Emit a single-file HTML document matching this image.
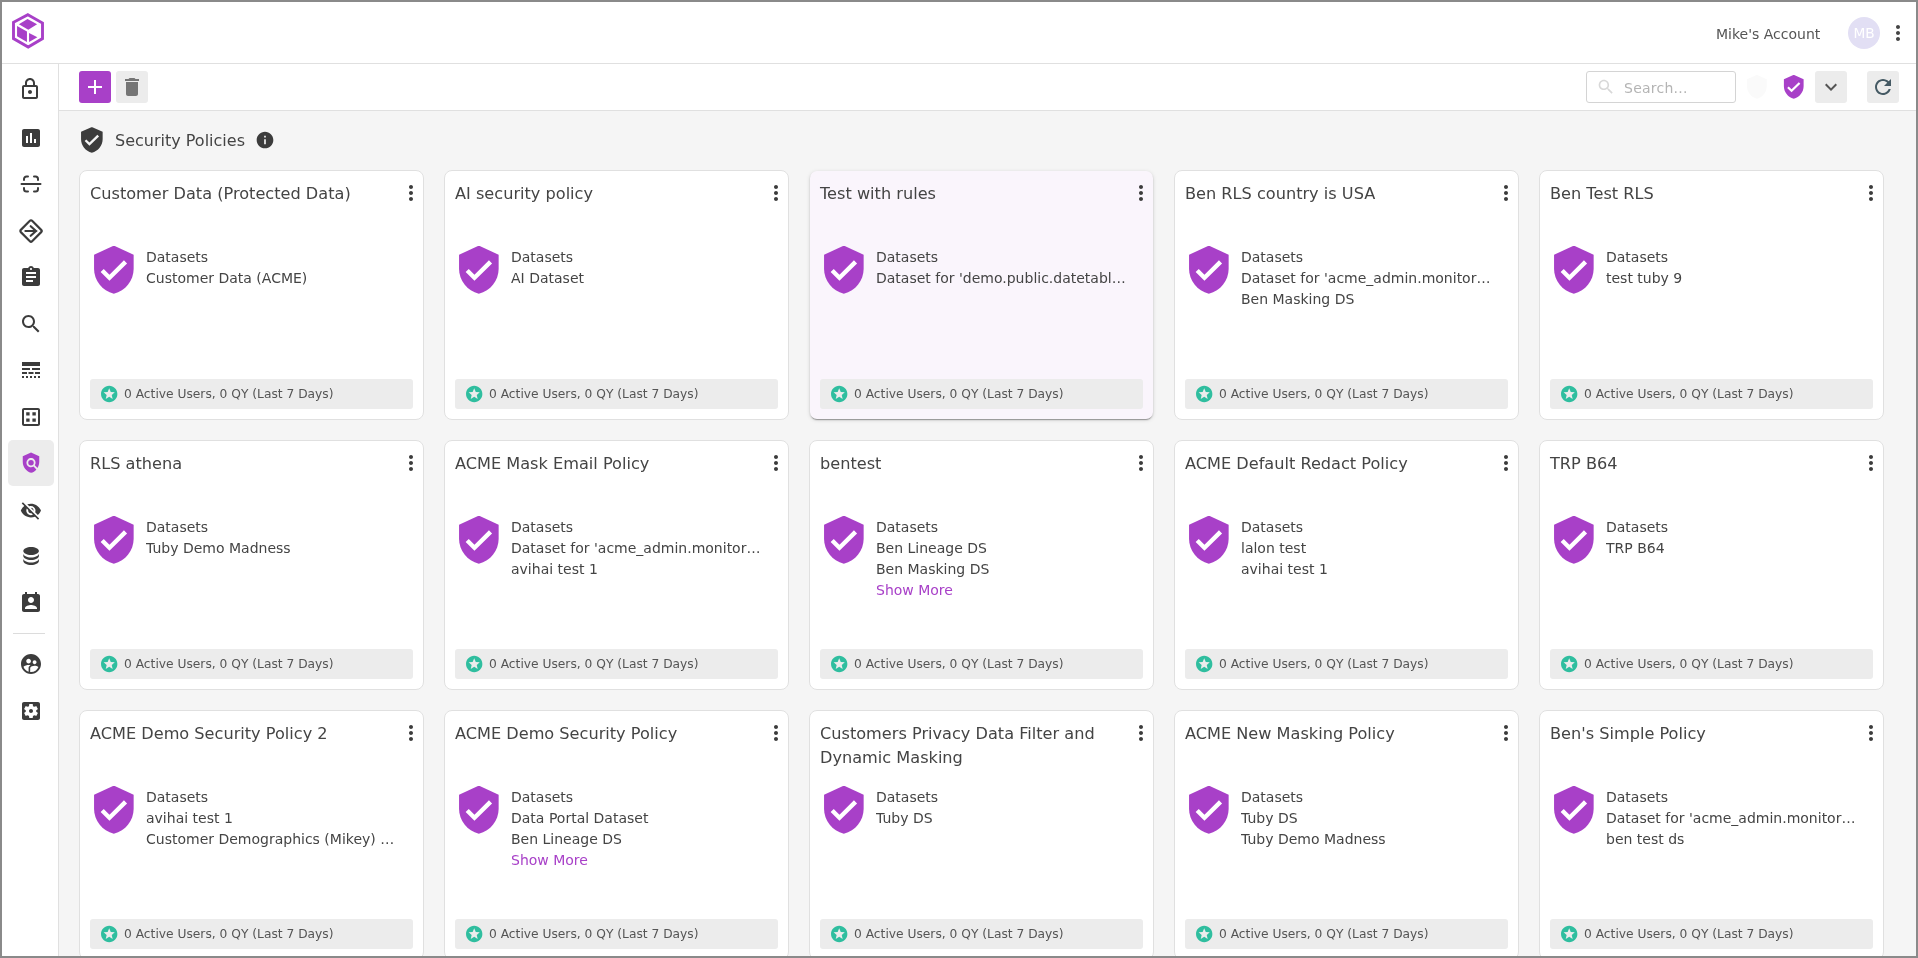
<!DOCTYPE html>
<html><head><meta charset="utf-8"><title>Security Policies</title>
<style>
*{box-sizing:border-box;margin:0;padding:0}
html,body{width:1918px;height:958px;overflow:hidden;background:#fff}
body{font-family:"DejaVu Sans","Liberation Sans",sans-serif;color:#444;position:relative}
#frame{position:absolute;left:0;top:0;width:1918px;height:958px;border:2px solid #8a8a8a;overflow:hidden;background:#f5f5f5}
#inner{position:absolute;left:-2px;top:-2px;width:1918px;height:958px;will-change:transform}
#header{position:absolute;left:0;top:0;width:1918px;height:64px;background:#fff;border-bottom:1px solid #e0e0e0}
#side{position:absolute;left:0;top:64px;width:59px;height:900px;background:#fff;border-right:1px solid #e0e0e0}
#toolbar{position:absolute;left:59px;top:64px;width:1860px;height:47px;background:#fff;border-bottom:1px solid #e0e0e0}
.abs{position:absolute}
.sicon{position:absolute;left:19px}
.btn{position:absolute;width:32px;height:32px;border-radius:3px;background:#ececec}
.btn svg{position:absolute;left:4px;top:4px}
.card{position:absolute;width:345px;height:250px;background:#fff;border:1px solid #e0e0e0;border-radius:8px}
.card.sel{background:#faf5fc;border:none;width:343px;height:248px;margin:1px 0 0 1px;border-radius:7px;box-shadow:0 2px 1px -1px rgba(0,0,0,.25),0 1px 2px 0 rgba(0,0,0,.16),0 1px 4px 0 rgba(0,0,0,.13)}
.ctitle{position:absolute;left:10px;top:11px;width:300px;font-size:16.15px;line-height:24px;color:#444}
.cmore{position:absolute;left:319px;top:10px}
.cshield{position:absolute;left:6px;top:70px}
.clines{position:absolute;left:66px;top:76.300px;width:250px;font-size:14px;line-height:21px;color:#444}
.clines div{white-space:nowrap;overflow:hidden;text-overflow:ellipsis}
.clines .more{color:#a840c8}
.cfoot{position:absolute;left:10px;top:208px;width:323px;height:30px;background:#ececec;border-radius:3px;font-size:12.25px;line-height:30px;color:#555;padding-left:34px;white-space:nowrap}

</style></head><body><div id="frame"><div id="inner">

<div id="header">
<svg class="abs" style="left:12px;top:13px" width="34" height="38" viewBox="0 0 34 38"><polygon points="15.900,1.700 30.500,10 30.500,25.600 16.200,34.100 1.500,25.600 1.500,9.300" fill="none" stroke="#a840c8" stroke-width="2.900" stroke-linejoin="miter"/><polygon points="15.500,6.050 25.100,11.300 16.300,16.750 6.900,11.300" fill="#a840c8"/><polygon points="5.050,13.100 14.960,18.600 14.960,29 5.050,23.300" fill="#a840c8"/><polygon points="17.050,19.900 25.400,24.300 17.050,29" fill="#a840c8"/></svg>
<div class="abs" style="left:1716px;top:25px;font-size:14px;line-height:18px;color:#555;white-space:nowrap">Mike's Account</div>
<div class="abs" style="left:1848px;top:17px;width:32px;height:32px;border-radius:16px;background:#e2dff4;color:#fff;font-size:13.7px;line-height:32px;text-align:center">MB</div>
<svg style="position:absolute;left:1886px;top:21px;overflow:visible" width="25" height="25" viewBox="0 0 25 25" ><g transform="translate(0.000 0.000) scale(1.000 1.000)"><path fill="#444" d="M12 8c1.1 0 2-.9 2-2s-.9-2-2-2-2 .9-2 2 .9 2 2 2zm0 2c-1.1 0-2 .9-2 2s.9 2 2 2 2-.9 2-2-.9-2-2-2zm0 6c-1.1 0-2 .9-2 2s.9 2 2 2 2-.9 2-2-.9-2-2-2z"/></g></svg>
</div>
<div id="side">
<div class="abs" style="left:8px;top:376px;width:46px;height:46px;border-radius:5px;background:#ececec"></div>
<svg style="position:absolute;left:18px;top:13px;overflow:visible" width="25" height="25" viewBox="0 0 25 25" ><g transform="translate(0.000 0.000) scale(1.000 1.000)"><path fill="#3c3c3c" d="M18 8h-1V6c0-2.76-2.24-5-5-5S7 3.24 7 6v2H6c-1.1 0-2 .9-2 2v10c0 1.1.9 2 2 2h12c1.1 0 2-.9 2-2V10c0-1.1-.9-2-2-2zM9 6c0-1.66 1.34-3 3-3s3 1.34 3 3v2H9V6zm9 14H6V10h12v10zm-6-3c1.1 0 2-.9 2-2s-.9-2-2-2-2 .9-2 2 .9 2 2 2z"/></g></svg>
<svg style="position:absolute;left:19px;top:62px;overflow:visible" width="25" height="25" viewBox="0 0 25 25" ><g transform="translate(0.000 0.000) scale(1.000 1.000)"><path fill="#3c3c3c" d="M19 3H5c-1.1 0-2 .9-2 2v14c0 1.1.9 2 2 2h14c1.1 0 2-.9 2-2V5c0-1.1-.9-2-2-2zM9 17H7v-7h2v7zm4 0h-2V7h2v10zm4 0h-2v-4h2v4z"/></g></svg>
<svg style="position:absolute;left:19px;top:108px" width="24" height="24" viewBox="0 0 24 24" fill="none" stroke="#3c3c3c" stroke-width="2" stroke-linecap="round"><path d="M2.500 12h19M5 8v-1a2.500 2.500 0 0 1 2.500-2.500h1.500M15 4.500h1.500a2.500 2.500 0 0 1 2.500 2.500v1M5 16v1a2.500 2.500 0 0 0 2.500 2.500h1.500M15 19.500h1.500a2.500 2.500 0 0 0 2.500-2.500v-1"/></svg>
<svg style="position:absolute;left:19px;top:155px" width="24" height="24" viewBox="0 0 24 24" fill="none" stroke="#3c3c3c" stroke-width="2.150" stroke-linecap="round" stroke-linejoin="round"><rect x="4" y="4" width="16" height="16" rx="1.600" transform="rotate(45 12 12)"/><path d="M6.400 12h11M11.700 7.200l5.300 4.800-5.300 4.800"/></svg>
<svg style="position:absolute;left:19px;top:201px;overflow:visible" width="25" height="25" viewBox="0 0 25 25" ><g transform="translate(0.000 0.000) scale(1.000 1.000)"><path fill="#3c3c3c" d="M19 3h-4.18C14.4 1.84 13.3 1 12 1c-1.3 0-2.4.84-2.82 2H5c-1.1 0-2 .9-2 2v14c0 1.1.9 2 2 2h14c1.1 0 2-.9 2-2V5c0-1.1-.9-2-2-2zm-7 0c.55 0 1 .45 1 1s-.45 1-1 1-1-.45-1-1 .45-1 1-1zm2 14H7v-2h7v2zm3-4H7v-2h10v2zm0-4H7V7h10v2z"/></g></svg>
<svg style="position:absolute;left:19px;top:248px;overflow:visible" width="25" height="25" viewBox="0 0 25 25" ><g transform="translate(0.000 0.000) scale(1.000 1.000)"><path fill="#3c3c3c" d="M15.5 14h-.79l-.28-.27C15.41 12.59 16 11.11 16 9.5 16 5.91 13.09 3 9.5 3S3 5.91 3 9.5 5.91 16 9.5 16c1.61 0 3.09-.59 4.23-1.57l.27.28v.79l5 4.99L20.49 19l-4.99-5zm-6 0C7.01 14 5 11.99 5 9.5S7.01 5 9.5 5 14 7.01 14 9.5 11.99 14 9.5 14z"/></g></svg>
<svg style="position:absolute;left:19px;top:294px;overflow:visible" width="25" height="25" viewBox="0 0 25 25" ><g transform="translate(0.000 0.000) scale(1.000 1.000)"><path fill="#3c3c3c" d="M3 16h5v-2H3v2zm6.5 0h5v-2h-5v2zm6.5 0h5v-2h-5v2zM3 20h2v-2H3v2zm4 0h2v-2H7v2zm4 0h2v-2h-2v2zm4 0h2v-2h-2v2zm4 0h2v-2h-2v2zM3 12h8v-2H3v2zm10 0h8v-2h-8v2zM3 4v4h18V4H3z"/></g></svg>
<svg style="position:absolute;left:19px;top:341px;overflow:visible" width="25" height="25" viewBox="0 0 25 25" ><g transform="translate(0.000 0.000) scale(1.000 1.000)"><path fill="#3c3c3c" d="M7.200 16.800h3.400v-3.400H7.200v3.400zm6.200 0h3.400v-3.400h-3.400v3.400zM7.200 10.600h3.400V7.200H7.200v3.400zm6.200-3.400v3.400h3.400V7.200h-3.400zM19 3H5c-1.1 0-2 .9-2 2v14c0 1.1.9 2 2 2h14c1.1 0 2-.9 2-2V5c0-1.1-.9-2-2-2zm0 16H5V5h14v14z"/></g></svg>
<svg style="position:absolute;left:20px;top:387px;overflow:visible" width="23" height="24" viewBox="0 0 23 24" ><g transform="translate(0.000 0.700) scale(0.917 0.917)"><path fill="#a840c8" d="M21 5l-9-4-9 4v6c0 5.55 3.84 10.74 9 12 2.3-.56 4.33-1.9 5.88-3.71l-3.12-3.12c-1.94 1.29-4.58 1.07-6.29-.64-1.95-1.95-1.95-5.12 0-7.07 1.95-1.95 5.12-1.95 7.07 0 1.71 1.71 1.92 4.35.64 6.29l2.9 2.9C20.29 15.69 21 13.38 21 11V5z"/><circle cx="12" cy="12" r="3" fill="#a840c8"/></g></svg>
<svg style="position:absolute;left:19px;top:435px;overflow:visible" width="24" height="24" viewBox="0 0 24 24" ><g transform="translate(0.900 0.600) scale(0.917 0.917)"><path fill="#3c3c3c" d="M12 7c2.76 0 5 2.24 5 5 0 .65-.13 1.26-.36 1.83l2.92 2.92c1.51-1.26 2.7-2.89 3.43-4.75-1.73-4.39-6-7.5-11-7.5-1.4 0-2.74.25-3.98.7l2.16 2.16C10.74 7.13 11.35 7 12 7zM2 4.27l2.28 2.28.46.46C3.08 8.3 1.78 10.02 1 12c1.73 4.39 6 7.5 11 7.5 1.55 0 3.03-.3 4.38-.84l.42.42L19.73 22 21 20.73 3.27 3 2 4.27zM7.53 9.8l1.55 1.55c-.05.21-.08.43-.08.65 0 1.66 1.34 3 3 3 .22 0 .44-.03.65-.08l1.55 1.55c-.67.33-1.41.53-2.2.53-2.76 0-5-2.24-5-5 0-.79.2-1.53.53-2.2zm4.31-.78l3.15 3.15.02-.16c0-1.66-1.34-3-3-3l-.17.01z"/></g></svg>
<svg style="position:absolute;left:20px;top:480px;overflow:visible" width="23" height="25" viewBox="0 0 23 25" ><g transform="translate(0.700 0.000) scale(0.867 1.000)"><path fill="#3c3c3c" d="M12 11c4.970 0 9-1.790 9-4s-4.030-4-9-4-9 1.790-9 4 4.030 4 9 4zM3 9.500V12c0 2.210 4.030 4 9 4s9-1.790 9-4V9.500c0 2.210-4.030 4-9 4s-9-1.790-9-4zM3 14.500V17c0 2.210 4.030 4 9 4s9-1.790 9-4v-2.500c0 2.210-4.030 4-9 4s-9-1.790-9-4z"/></g></svg>
<svg style="position:absolute;left:19px;top:527px;overflow:visible" width="25" height="25" viewBox="0 0 25 25" ><g transform="translate(0.000 0.000) scale(1.000 1.000)"><path fill="#3c3c3c" d="M19 3h-1V1h-2v2H8V1H6v2H5c-1.11 0-2 .9-2 2v14c0 1.1.89 2 2 2h14c1.1 0 2-.9 2-2V5c0-1.1-.9-2-2-2zm-7 3c1.66 0 3 1.34 3 3s-1.34 3-3 3-3-1.34-3-3 1.34-3 3-3zm6 12H6v-1c0-2 4-3.1 6-3.1s6 1.1 6 3.1v1z"/></g></svg>
<div class="abs" style="left:13px;top:569px;width:32px;height:1px;background:#dcdcdc"></div>
<svg style="position:absolute;left:19px;top:588px;overflow:visible" width="25" height="25" viewBox="0 0 25 25" ><g transform="translate(0.000 0.000) scale(1.000 1.000)"><path fill="#3c3c3c" d="M11.99 2c-5.52 0-10 4.48-10 10s4.48 10 10 10 10-4.48 10-10-4.48-10-10-10zm3.61 6.34c1.07 0 1.93.86 1.93 1.93 0 1.07-.86 1.93-1.93 1.93-1.07 0-1.93-.86-1.93-1.93-.01-1.07.86-1.93 1.93-1.93zm-6-1.58c1.3 0 2.36 1.06 2.36 2.36 0 1.3-1.06 2.36-2.36 2.36s-2.36-1.06-2.36-2.36c0-1.31 1.05-2.36 2.36-2.36zm0 9.13v3.75c-2.4-.75-4.3-2.6-5.14-4.96 1.05-1.12 3.67-1.69 5.14-1.69.53 0 1.2.08 1.9.22-1.64.87-1.9 2.02-1.9 2.68zM11.99 20c-.27 0-.53-.01-.79-.04v-4.07c0-1.42 2.94-2.13 4.4-2.13 1.07 0 2.92.39 3.84 1.15-1.17 2.97-4.06 5.09-7.45 5.09z"/></g></svg>
<svg style="position:absolute;left:19px;top:635px;overflow:visible" width="25" height="25" viewBox="0 0 25 25" ><g transform="translate(0.000 0.000) scale(1.000 1.000)"><path fill="#3c3c3c" d="M12 10c-1.1 0-2 .9-2 2s.9 2 2 2 2-.9 2-2-.9-2-2-2zm7-7H5c-1.11 0-2 .9-2 2v14c0 1.1.89 2 2 2h14c1.11 0 2-.9 2-2V5c0-1.1-.89-2-2-2zm-1.750 9c0 .23-.02.46-.05.68l1.480 1.160c.13.11.17.3.08.45l-1.400 2.420c-.09.15-.27.21-.43.15l-1.740-.7c-.36.28-.76.51-1.180.69l-.26 1.850c-.03.17-.18.3-.35.3h-2.800c-.17 0-.32-.13-.35-.29l-.26-1.850c-.43-.18-.82-.41-1.180-.69l-1.740.7c-.16.06-.34 0-.43-.15l-1.400-2.420c-.09-.15-.05-.34.08-.45l1.480-1.160c-.03-.23-.05-.46-.05-.69 0-.23.02-.46.05-.68l-1.480-1.160c-.13-.11-.17-.3-.08-.45l1.400-2.420c.09-.15.27-.21.43-.15l1.740.7c.36-.28.76-.51 1.180-.69l.26-1.850c.03-.17.18-.3.35-.3h2.800c.17 0 .32.13.35.29l.26 1.850c.43.18.82.41 1.180.69l1.740-.7c.16-.06.34 0 .43.15l1.400 2.420c.09.15.05.34-.08.45l-1.480 1.160c.03.23.05.46.05.69z"/></g></svg>
</div>
<div id="toolbar">
<div class="btn" style="left:20px;top:7px;background:#a840c8"><svg style="" width="24" height="24" viewBox="0 0 24 24"><path fill="#fff" d="M19 13h-6v6h-2v-6H5v-2h6V5h2v6h6v2z"/></svg></div>
<div class="btn" style="left:57px;top:7px"><svg style="" width="24" height="24" viewBox="0 0 24 24"><path fill="#757575" d="M6 19c0 1.1.9 2 2 2h8c1.1 0 2-.9 2-2V7H6v12zM19 4h-3.5l-1-1h-5l-1 1H5v2h14V4z"/></svg></div>
<div class="abs" style="left:1527px;top:7px;width:150px;height:32px;border:1px solid #d4d4d4;border-radius:3px;background:#fff"></div>
<svg style="position:absolute;left:1537px;top:13px;overflow:visible" width="21" height="21" viewBox="0 0 21 21" ><g transform="translate(0.250 0.250) scale(0.804 0.804)"><path fill="#d8d8d8" d="M15.5 14h-.79l-.28-.27C15.41 12.59 16 11.11 16 9.5 16 5.91 13.09 3 9.5 3S3 5.91 3 9.5 5.91 16 9.5 16c1.61 0 3.09-.59 4.23-1.57l.27.28v.79l5 4.99L20.49 19l-4.99-5zm-6 0C7.01 14 5 11.99 5 9.5S7.01 5 9.5 5 14 7.01 14 9.5 11.99 14 9.5 14z"/></g></svg>
<div class="abs" style="left:1565px;top:15px;font-size:14px;line-height:18px;letter-spacing:.25px;color:#b4b4b4">Search...</div>
<svg style="position:absolute;left:1684px;top:9px;overflow:visible" width="29" height="28" viewBox="0 0 29 28" ><g transform="translate(0.750 0.950) scale(1.096 1.079)"><path fill="#fafafa" d="M12.400 1.050h-.8L3 5v6.500c0 5.300 3.700 10.200 9 11.500 5.300-1.300 9-6.200 9-11.500V5l-8.600-3.950z"/></g></svg>
<svg style="position:absolute;left:1721px;top:9px;overflow:visible" width="28" height="28" viewBox="0 0 28 28" ><g transform="translate(0.600 0.950) scale(1.096 1.079)"><path fill="#a840c8" d="M12.400 1.050h-.8L3 5v6.500c0 5.300 3.700 10.200 9 11.500 5.300-1.300 9-6.200 9-11.500V5l-8.600-3.950zM10 17l-4-4 1.410-1.410L10 14.170l6.590-6.590L18 9l-8 8z"/></g></svg>
<div class="btn" style="left:1756px;top:7px"><svg style="" width="24" height="24" viewBox="0 0 24 24"><path fill="#555" d="M16.590 8.590L12 13.170 7.410 8.590 6 10l6 6 6-6z"/></svg></div>
<div class="btn" style="left:1808px;top:7px"><svg style="" width="24" height="24" viewBox="0 0 24 24"><path fill="#455a64" d="M17.650 6.350C16.2 4.9 14.210 4 12 4c-4.420 0-7.990 3.580-7.990 8s3.570 8 7.990 8c3.730 0 6.840-2.550 7.730-6h-2.080c-.82 2.330-3.040 4-5.650 4-3.310 0-6-2.690-6-6s2.690-6 6-6c1.660 0 3.140.69 4.220 1.780L13 11h7V4l-2.350 2.350z"/></svg></div>
</div>
<svg style="position:absolute;left:77px;top:125px;overflow:visible" width="31" height="31" viewBox="0 0 31 31" ><g transform="translate(0.450 0.900) scale(1.200 1.171)"><path fill="#3c3c3c" d="M12.400 1.050h-.8L3 5v6.500c0 5.300 3.700 10.200 9 11.500 5.300-1.300 9-6.200 9-11.500V5l-8.600-3.950zM10 17l-4-4 1.410-1.410L10 14.170l6.590-6.590L18 9l-8 8z"/></g></svg>
<div class="abs" style="left:115px;top:130px;font-size:16px;line-height:22px;color:#444;white-space:nowrap">Security Policies</div>
<svg style="position:absolute;left:255px;top:130px;overflow:visible" width="21" height="21" viewBox="0 0 21 21" ><g transform="translate(0.000 0.000) scale(0.833 0.833)"><path fill="#3c3c3c" d="M12 2C6.48 2 2 6.48 2 12s4.48 10 10 10 10-4.48 10-10S17.52 2 12 2zm1 15h-2v-6h2v6zm0-8h-2V7h2v2z"/></g></svg>
<div class="card" style="left:79px;top:170px">
<div class="ctitle">Customer Data (Protected Data)</div>
<svg style="position:absolute;left:319px;top:10px;overflow:visible" width="25" height="25" viewBox="0 0 25 25" ><g transform="translate(0.000 0.000) scale(1.000 1.000)"><path fill="#3c3c3c" d="M12 8c1.1 0 2-.9 2-2s-.9-2-2-2-2 .9-2 2 .9 2 2 2zm0 2c-1.1 0-2 .9-2 2s.9 2 2 2 2-.9 2-2-.9-2-2-2zm0 6c-1.1 0-2 .9-2 2s.9 2 2 2 2-.9 2-2-.9-2-2-2z"/></g></svg>
<svg style="position:absolute;left:7px;top:72px;overflow:visible" width="55" height="55" viewBox="0 0 55 55" ><g transform="translate(0.450 0.800) scale(2.200 2.177)"><path fill="#a840c8" d="M12.400 1.050h-.8L3 5v6.500c0 5.300 3.700 10.200 9 11.500 5.300-1.300 9-6.200 9-11.500V5l-8.600-3.950z"/><path fill="#fff" d="M10 17l-4-4 1.410-1.410L10 14.170l6.590-6.590L18 9l-8 8z"/></g></svg>
<div class="clines"><div>Datasets</div>
<div>Customer Data (ACME)</div>
</div>
<div class="cfoot"><svg style="position:absolute;left:9px;top:5px;overflow:visible" width="21" height="21" viewBox="0 0 21 21" ><g transform="translate(0.400 0.200) scale(0.817 0.817)"><path fill="#2fbe9f" d="M11.99 2C6.470 2 2 6.480 2 12s4.470 10 9.990 10C17.520 22 22 17.520 22 12S17.520 2 11.990 2zm4.240 16L12 15.450 7.770 18l1.120-4.810-3.730-3.230 4.920-.42L12 5l1.920 4.530 4.920.42-3.730 3.230L16.230 18z"/></g></svg>0 Active Users, 0 QY (Last 7 Days)</div>
</div>
<div class="card" style="left:444px;top:170px">
<div class="ctitle">AI security policy</div>
<svg style="position:absolute;left:319px;top:10px;overflow:visible" width="25" height="25" viewBox="0 0 25 25" ><g transform="translate(0.000 0.000) scale(1.000 1.000)"><path fill="#3c3c3c" d="M12 8c1.1 0 2-.9 2-2s-.9-2-2-2-2 .9-2 2 .9 2 2 2zm0 2c-1.1 0-2 .9-2 2s.9 2 2 2 2-.9 2-2-.9-2-2-2zm0 6c-1.1 0-2 .9-2 2s.9 2 2 2 2-.9 2-2-.9-2-2-2z"/></g></svg>
<svg style="position:absolute;left:7px;top:72px;overflow:visible" width="55" height="55" viewBox="0 0 55 55" ><g transform="translate(0.450 0.800) scale(2.200 2.177)"><path fill="#a840c8" d="M12.400 1.050h-.8L3 5v6.500c0 5.300 3.700 10.200 9 11.500 5.300-1.300 9-6.200 9-11.500V5l-8.600-3.950z"/><path fill="#fff" d="M10 17l-4-4 1.410-1.410L10 14.170l6.590-6.590L18 9l-8 8z"/></g></svg>
<div class="clines"><div>Datasets</div>
<div>AI Dataset</div>
</div>
<div class="cfoot"><svg style="position:absolute;left:9px;top:5px;overflow:visible" width="21" height="21" viewBox="0 0 21 21" ><g transform="translate(0.400 0.200) scale(0.817 0.817)"><path fill="#2fbe9f" d="M11.99 2C6.470 2 2 6.480 2 12s4.470 10 9.990 10C17.520 22 22 17.520 22 12S17.520 2 11.990 2zm4.240 16L12 15.450 7.770 18l1.120-4.810-3.730-3.230 4.920-.42L12 5l1.920 4.530 4.920.42-3.730 3.230L16.230 18z"/></g></svg>0 Active Users, 0 QY (Last 7 Days)</div>
</div>
<div class="card sel" style="left:809px;top:170px">
<div class="ctitle">Test with rules</div>
<svg style="position:absolute;left:319px;top:10px;overflow:visible" width="25" height="25" viewBox="0 0 25 25" ><g transform="translate(0.000 0.000) scale(1.000 1.000)"><path fill="#3c3c3c" d="M12 8c1.1 0 2-.9 2-2s-.9-2-2-2-2 .9-2 2 .9 2 2 2zm0 2c-1.1 0-2 .9-2 2s.9 2 2 2 2-.9 2-2-.9-2-2-2zm0 6c-1.1 0-2 .9-2 2s.9 2 2 2 2-.9 2-2-.9-2-2-2z"/></g></svg>
<svg style="position:absolute;left:7px;top:72px;overflow:visible" width="55" height="55" viewBox="0 0 55 55" ><g transform="translate(0.450 0.800) scale(2.200 2.177)"><path fill="#a840c8" d="M12.400 1.050h-.8L3 5v6.500c0 5.300 3.700 10.200 9 11.500 5.300-1.300 9-6.200 9-11.500V5l-8.600-3.950z"/><path fill="#fff" d="M10 17l-4-4 1.410-1.410L10 14.170l6.590-6.590L18 9l-8 8z"/></g></svg>
<div class="clines"><div>Datasets</div>
<div>Dataset for 'demo.public.datetable_dim'</div>
</div>
<div class="cfoot"><svg style="position:absolute;left:9px;top:5px;overflow:visible" width="21" height="21" viewBox="0 0 21 21" ><g transform="translate(0.400 0.200) scale(0.817 0.817)"><path fill="#2fbe9f" d="M11.99 2C6.470 2 2 6.480 2 12s4.470 10 9.990 10C17.520 22 22 17.520 22 12S17.520 2 11.990 2zm4.240 16L12 15.450 7.770 18l1.120-4.810-3.730-3.230 4.920-.42L12 5l1.920 4.530 4.920.42-3.730 3.230L16.230 18z"/></g></svg>0 Active Users, 0 QY (Last 7 Days)</div>
</div>
<div class="card" style="left:1174px;top:170px">
<div class="ctitle">Ben RLS country is USA</div>
<svg style="position:absolute;left:319px;top:10px;overflow:visible" width="25" height="25" viewBox="0 0 25 25" ><g transform="translate(0.000 0.000) scale(1.000 1.000)"><path fill="#3c3c3c" d="M12 8c1.1 0 2-.9 2-2s-.9-2-2-2-2 .9-2 2 .9 2 2 2zm0 2c-1.1 0-2 .9-2 2s.9 2 2 2 2-.9 2-2-.9-2-2-2zm0 6c-1.1 0-2 .9-2 2s.9 2 2 2 2-.9 2-2-.9-2-2-2z"/></g></svg>
<svg style="position:absolute;left:7px;top:72px;overflow:visible" width="55" height="55" viewBox="0 0 55 55" ><g transform="translate(0.450 0.800) scale(2.200 2.177)"><path fill="#a840c8" d="M12.400 1.050h-.8L3 5v6.500c0 5.300 3.700 10.200 9 11.500 5.300-1.300 9-6.200 9-11.500V5l-8.600-3.950z"/><path fill="#fff" d="M10 17l-4-4 1.410-1.410L10 14.170l6.590-6.590L18 9l-8 8z"/></g></svg>
<div class="clines"><div>Datasets</div>
<div>Dataset for 'acme_admin.monitoring'</div>
<div>Ben Masking DS</div>
</div>
<div class="cfoot"><svg style="position:absolute;left:9px;top:5px;overflow:visible" width="21" height="21" viewBox="0 0 21 21" ><g transform="translate(0.400 0.200) scale(0.817 0.817)"><path fill="#2fbe9f" d="M11.99 2C6.470 2 2 6.480 2 12s4.470 10 9.990 10C17.520 22 22 17.520 22 12S17.520 2 11.990 2zm4.240 16L12 15.450 7.770 18l1.120-4.810-3.730-3.230 4.920-.42L12 5l1.920 4.530 4.920.42-3.730 3.230L16.230 18z"/></g></svg>0 Active Users, 0 QY (Last 7 Days)</div>
</div>
<div class="card" style="left:1539px;top:170px">
<div class="ctitle">Ben Test RLS</div>
<svg style="position:absolute;left:319px;top:10px;overflow:visible" width="25" height="25" viewBox="0 0 25 25" ><g transform="translate(0.000 0.000) scale(1.000 1.000)"><path fill="#3c3c3c" d="M12 8c1.1 0 2-.9 2-2s-.9-2-2-2-2 .9-2 2 .9 2 2 2zm0 2c-1.1 0-2 .9-2 2s.9 2 2 2 2-.9 2-2-.9-2-2-2zm0 6c-1.1 0-2 .9-2 2s.9 2 2 2 2-.9 2-2-.9-2-2-2z"/></g></svg>
<svg style="position:absolute;left:7px;top:72px;overflow:visible" width="55" height="55" viewBox="0 0 55 55" ><g transform="translate(0.450 0.800) scale(2.200 2.177)"><path fill="#a840c8" d="M12.400 1.050h-.8L3 5v6.500c0 5.300 3.700 10.200 9 11.500 5.300-1.300 9-6.200 9-11.500V5l-8.600-3.950z"/><path fill="#fff" d="M10 17l-4-4 1.410-1.410L10 14.170l6.590-6.590L18 9l-8 8z"/></g></svg>
<div class="clines"><div>Datasets</div>
<div>test tuby 9</div>
</div>
<div class="cfoot"><svg style="position:absolute;left:9px;top:5px;overflow:visible" width="21" height="21" viewBox="0 0 21 21" ><g transform="translate(0.400 0.200) scale(0.817 0.817)"><path fill="#2fbe9f" d="M11.99 2C6.470 2 2 6.480 2 12s4.470 10 9.990 10C17.520 22 22 17.520 22 12S17.520 2 11.990 2zm4.240 16L12 15.450 7.770 18l1.120-4.810-3.730-3.230 4.920-.42L12 5l1.920 4.530 4.920.42-3.730 3.230L16.230 18z"/></g></svg>0 Active Users, 0 QY (Last 7 Days)</div>
</div>
<div class="card" style="left:79px;top:440px">
<div class="ctitle">RLS athena</div>
<svg style="position:absolute;left:319px;top:10px;overflow:visible" width="25" height="25" viewBox="0 0 25 25" ><g transform="translate(0.000 0.000) scale(1.000 1.000)"><path fill="#3c3c3c" d="M12 8c1.1 0 2-.9 2-2s-.9-2-2-2-2 .9-2 2 .9 2 2 2zm0 2c-1.1 0-2 .9-2 2s.9 2 2 2 2-.9 2-2-.9-2-2-2zm0 6c-1.1 0-2 .9-2 2s.9 2 2 2 2-.9 2-2-.9-2-2-2z"/></g></svg>
<svg style="position:absolute;left:7px;top:72px;overflow:visible" width="55" height="55" viewBox="0 0 55 55" ><g transform="translate(0.450 0.800) scale(2.200 2.177)"><path fill="#a840c8" d="M12.400 1.050h-.8L3 5v6.500c0 5.300 3.700 10.200 9 11.500 5.300-1.300 9-6.200 9-11.500V5l-8.600-3.950z"/><path fill="#fff" d="M10 17l-4-4 1.410-1.410L10 14.170l6.590-6.590L18 9l-8 8z"/></g></svg>
<div class="clines"><div>Datasets</div>
<div>Tuby Demo Madness</div>
</div>
<div class="cfoot"><svg style="position:absolute;left:9px;top:5px;overflow:visible" width="21" height="21" viewBox="0 0 21 21" ><g transform="translate(0.400 0.200) scale(0.817 0.817)"><path fill="#2fbe9f" d="M11.99 2C6.470 2 2 6.480 2 12s4.470 10 9.990 10C17.520 22 22 17.520 22 12S17.520 2 11.990 2zm4.240 16L12 15.450 7.770 18l1.120-4.810-3.730-3.230 4.920-.42L12 5l1.920 4.530 4.920.42-3.730 3.230L16.230 18z"/></g></svg>0 Active Users, 0 QY (Last 7 Days)</div>
</div>
<div class="card" style="left:444px;top:440px">
<div class="ctitle">ACME Mask Email Policy</div>
<svg style="position:absolute;left:319px;top:10px;overflow:visible" width="25" height="25" viewBox="0 0 25 25" ><g transform="translate(0.000 0.000) scale(1.000 1.000)"><path fill="#3c3c3c" d="M12 8c1.1 0 2-.9 2-2s-.9-2-2-2-2 .9-2 2 .9 2 2 2zm0 2c-1.1 0-2 .9-2 2s.9 2 2 2 2-.9 2-2-.9-2-2-2zm0 6c-1.1 0-2 .9-2 2s.9 2 2 2 2-.9 2-2-.9-2-2-2z"/></g></svg>
<svg style="position:absolute;left:7px;top:72px;overflow:visible" width="55" height="55" viewBox="0 0 55 55" ><g transform="translate(0.450 0.800) scale(2.200 2.177)"><path fill="#a840c8" d="M12.400 1.050h-.8L3 5v6.500c0 5.300 3.700 10.200 9 11.500 5.300-1.300 9-6.200 9-11.500V5l-8.600-3.950z"/><path fill="#fff" d="M10 17l-4-4 1.410-1.410L10 14.170l6.590-6.590L18 9l-8 8z"/></g></svg>
<div class="clines"><div>Datasets</div>
<div>Dataset for 'acme_admin.monitoring'</div>
<div>avihai test 1</div>
</div>
<div class="cfoot"><svg style="position:absolute;left:9px;top:5px;overflow:visible" width="21" height="21" viewBox="0 0 21 21" ><g transform="translate(0.400 0.200) scale(0.817 0.817)"><path fill="#2fbe9f" d="M11.99 2C6.470 2 2 6.480 2 12s4.470 10 9.990 10C17.520 22 22 17.520 22 12S17.520 2 11.990 2zm4.240 16L12 15.450 7.770 18l1.120-4.810-3.730-3.230 4.920-.42L12 5l1.920 4.530 4.920.42-3.730 3.230L16.230 18z"/></g></svg>0 Active Users, 0 QY (Last 7 Days)</div>
</div>
<div class="card" style="left:809px;top:440px">
<div class="ctitle">bentest</div>
<svg style="position:absolute;left:319px;top:10px;overflow:visible" width="25" height="25" viewBox="0 0 25 25" ><g transform="translate(0.000 0.000) scale(1.000 1.000)"><path fill="#3c3c3c" d="M12 8c1.1 0 2-.9 2-2s-.9-2-2-2-2 .9-2 2 .9 2 2 2zm0 2c-1.1 0-2 .9-2 2s.9 2 2 2 2-.9 2-2-.9-2-2-2zm0 6c-1.1 0-2 .9-2 2s.9 2 2 2 2-.9 2-2-.9-2-2-2z"/></g></svg>
<svg style="position:absolute;left:7px;top:72px;overflow:visible" width="55" height="55" viewBox="0 0 55 55" ><g transform="translate(0.450 0.800) scale(2.200 2.177)"><path fill="#a840c8" d="M12.400 1.050h-.8L3 5v6.500c0 5.300 3.700 10.200 9 11.500 5.300-1.300 9-6.200 9-11.500V5l-8.600-3.950z"/><path fill="#fff" d="M10 17l-4-4 1.410-1.410L10 14.170l6.590-6.590L18 9l-8 8z"/></g></svg>
<div class="clines"><div>Datasets</div>
<div>Ben Lineage DS</div>
<div>Ben Masking DS</div>
<div class="more">Show More</div>
</div>
<div class="cfoot"><svg style="position:absolute;left:9px;top:5px;overflow:visible" width="21" height="21" viewBox="0 0 21 21" ><g transform="translate(0.400 0.200) scale(0.817 0.817)"><path fill="#2fbe9f" d="M11.99 2C6.470 2 2 6.480 2 12s4.470 10 9.990 10C17.520 22 22 17.520 22 12S17.520 2 11.990 2zm4.240 16L12 15.450 7.770 18l1.120-4.810-3.730-3.230 4.920-.42L12 5l1.920 4.530 4.920.42-3.730 3.230L16.230 18z"/></g></svg>0 Active Users, 0 QY (Last 7 Days)</div>
</div>
<div class="card" style="left:1174px;top:440px">
<div class="ctitle">ACME Default Redact Policy</div>
<svg style="position:absolute;left:319px;top:10px;overflow:visible" width="25" height="25" viewBox="0 0 25 25" ><g transform="translate(0.000 0.000) scale(1.000 1.000)"><path fill="#3c3c3c" d="M12 8c1.1 0 2-.9 2-2s-.9-2-2-2-2 .9-2 2 .9 2 2 2zm0 2c-1.1 0-2 .9-2 2s.9 2 2 2 2-.9 2-2-.9-2-2-2zm0 6c-1.1 0-2 .9-2 2s.9 2 2 2 2-.9 2-2-.9-2-2-2z"/></g></svg>
<svg style="position:absolute;left:7px;top:72px;overflow:visible" width="55" height="55" viewBox="0 0 55 55" ><g transform="translate(0.450 0.800) scale(2.200 2.177)"><path fill="#a840c8" d="M12.400 1.050h-.8L3 5v6.500c0 5.300 3.700 10.200 9 11.500 5.300-1.300 9-6.200 9-11.500V5l-8.600-3.950z"/><path fill="#fff" d="M10 17l-4-4 1.410-1.410L10 14.170l6.590-6.590L18 9l-8 8z"/></g></svg>
<div class="clines"><div>Datasets</div>
<div>lalon test</div>
<div>avihai test 1</div>
</div>
<div class="cfoot"><svg style="position:absolute;left:9px;top:5px;overflow:visible" width="21" height="21" viewBox="0 0 21 21" ><g transform="translate(0.400 0.200) scale(0.817 0.817)"><path fill="#2fbe9f" d="M11.99 2C6.470 2 2 6.480 2 12s4.470 10 9.990 10C17.520 22 22 17.520 22 12S17.520 2 11.990 2zm4.240 16L12 15.450 7.770 18l1.120-4.810-3.730-3.230 4.920-.42L12 5l1.920 4.530 4.920.42-3.730 3.230L16.230 18z"/></g></svg>0 Active Users, 0 QY (Last 7 Days)</div>
</div>
<div class="card" style="left:1539px;top:440px">
<div class="ctitle">TRP B64</div>
<svg style="position:absolute;left:319px;top:10px;overflow:visible" width="25" height="25" viewBox="0 0 25 25" ><g transform="translate(0.000 0.000) scale(1.000 1.000)"><path fill="#3c3c3c" d="M12 8c1.1 0 2-.9 2-2s-.9-2-2-2-2 .9-2 2 .9 2 2 2zm0 2c-1.1 0-2 .9-2 2s.9 2 2 2 2-.9 2-2-.9-2-2-2zm0 6c-1.1 0-2 .9-2 2s.9 2 2 2 2-.9 2-2-.9-2-2-2z"/></g></svg>
<svg style="position:absolute;left:7px;top:72px;overflow:visible" width="55" height="55" viewBox="0 0 55 55" ><g transform="translate(0.450 0.800) scale(2.200 2.177)"><path fill="#a840c8" d="M12.400 1.050h-.8L3 5v6.500c0 5.300 3.700 10.200 9 11.500 5.300-1.300 9-6.200 9-11.500V5l-8.600-3.950z"/><path fill="#fff" d="M10 17l-4-4 1.410-1.410L10 14.170l6.590-6.590L18 9l-8 8z"/></g></svg>
<div class="clines"><div>Datasets</div>
<div>TRP B64</div>
</div>
<div class="cfoot"><svg style="position:absolute;left:9px;top:5px;overflow:visible" width="21" height="21" viewBox="0 0 21 21" ><g transform="translate(0.400 0.200) scale(0.817 0.817)"><path fill="#2fbe9f" d="M11.99 2C6.470 2 2 6.480 2 12s4.470 10 9.990 10C17.520 22 22 17.520 22 12S17.520 2 11.990 2zm4.240 16L12 15.450 7.770 18l1.120-4.810-3.730-3.230 4.920-.42L12 5l1.920 4.530 4.920.42-3.730 3.230L16.230 18z"/></g></svg>0 Active Users, 0 QY (Last 7 Days)</div>
</div>
<div class="card" style="left:79px;top:710px">
<div class="ctitle">ACME Demo Security Policy 2</div>
<svg style="position:absolute;left:319px;top:10px;overflow:visible" width="25" height="25" viewBox="0 0 25 25" ><g transform="translate(0.000 0.000) scale(1.000 1.000)"><path fill="#3c3c3c" d="M12 8c1.1 0 2-.9 2-2s-.9-2-2-2-2 .9-2 2 .9 2 2 2zm0 2c-1.1 0-2 .9-2 2s.9 2 2 2 2-.9 2-2-.9-2-2-2zm0 6c-1.1 0-2 .9-2 2s.9 2 2 2 2-.9 2-2-.9-2-2-2z"/></g></svg>
<svg style="position:absolute;left:7px;top:72px;overflow:visible" width="55" height="55" viewBox="0 0 55 55" ><g transform="translate(0.450 0.800) scale(2.200 2.177)"><path fill="#a840c8" d="M12.400 1.050h-.8L3 5v6.500c0 5.300 3.700 10.200 9 11.500 5.300-1.300 9-6.200 9-11.500V5l-8.600-3.950z"/><path fill="#fff" d="M10 17l-4-4 1.410-1.410L10 14.170l6.590-6.590L18 9l-8 8z"/></g></svg>
<div class="clines"><div>Datasets</div>
<div>avihai test 1</div>
<div>Customer Demographics (Mikey) Dataset</div>
</div>
<div class="cfoot"><svg style="position:absolute;left:9px;top:5px;overflow:visible" width="21" height="21" viewBox="0 0 21 21" ><g transform="translate(0.400 0.200) scale(0.817 0.817)"><path fill="#2fbe9f" d="M11.99 2C6.470 2 2 6.480 2 12s4.470 10 9.990 10C17.520 22 22 17.520 22 12S17.520 2 11.990 2zm4.240 16L12 15.450 7.770 18l1.120-4.810-3.730-3.230 4.920-.42L12 5l1.920 4.530 4.920.42-3.730 3.230L16.230 18z"/></g></svg>0 Active Users, 0 QY (Last 7 Days)</div>
</div>
<div class="card" style="left:444px;top:710px">
<div class="ctitle">ACME Demo Security Policy</div>
<svg style="position:absolute;left:319px;top:10px;overflow:visible" width="25" height="25" viewBox="0 0 25 25" ><g transform="translate(0.000 0.000) scale(1.000 1.000)"><path fill="#3c3c3c" d="M12 8c1.1 0 2-.9 2-2s-.9-2-2-2-2 .9-2 2 .9 2 2 2zm0 2c-1.1 0-2 .9-2 2s.9 2 2 2 2-.9 2-2-.9-2-2-2zm0 6c-1.1 0-2 .9-2 2s.9 2 2 2 2-.9 2-2-.9-2-2-2z"/></g></svg>
<svg style="position:absolute;left:7px;top:72px;overflow:visible" width="55" height="55" viewBox="0 0 55 55" ><g transform="translate(0.450 0.800) scale(2.200 2.177)"><path fill="#a840c8" d="M12.400 1.050h-.8L3 5v6.500c0 5.300 3.700 10.200 9 11.500 5.300-1.300 9-6.200 9-11.500V5l-8.600-3.950z"/><path fill="#fff" d="M10 17l-4-4 1.410-1.410L10 14.170l6.590-6.590L18 9l-8 8z"/></g></svg>
<div class="clines"><div>Datasets</div>
<div>Data Portal Dataset</div>
<div>Ben Lineage DS</div>
<div class="more">Show More</div>
</div>
<div class="cfoot"><svg style="position:absolute;left:9px;top:5px;overflow:visible" width="21" height="21" viewBox="0 0 21 21" ><g transform="translate(0.400 0.200) scale(0.817 0.817)"><path fill="#2fbe9f" d="M11.99 2C6.470 2 2 6.480 2 12s4.470 10 9.990 10C17.520 22 22 17.520 22 12S17.520 2 11.990 2zm4.240 16L12 15.450 7.770 18l1.120-4.810-3.730-3.230 4.920-.42L12 5l1.920 4.530 4.920.42-3.730 3.230L16.230 18z"/></g></svg>0 Active Users, 0 QY (Last 7 Days)</div>
</div>
<div class="card" style="left:809px;top:710px">
<div class="ctitle">Customers Privacy Data Filter and Dynamic Masking</div>
<svg style="position:absolute;left:319px;top:10px;overflow:visible" width="25" height="25" viewBox="0 0 25 25" ><g transform="translate(0.000 0.000) scale(1.000 1.000)"><path fill="#3c3c3c" d="M12 8c1.1 0 2-.9 2-2s-.9-2-2-2-2 .9-2 2 .9 2 2 2zm0 2c-1.1 0-2 .9-2 2s.9 2 2 2 2-.9 2-2-.9-2-2-2zm0 6c-1.1 0-2 .9-2 2s.9 2 2 2 2-.9 2-2-.9-2-2-2z"/></g></svg>
<svg style="position:absolute;left:7px;top:72px;overflow:visible" width="55" height="55" viewBox="0 0 55 55" ><g transform="translate(0.450 0.800) scale(2.200 2.177)"><path fill="#a840c8" d="M12.400 1.050h-.8L3 5v6.500c0 5.300 3.700 10.200 9 11.500 5.300-1.300 9-6.200 9-11.500V5l-8.600-3.950z"/><path fill="#fff" d="M10 17l-4-4 1.410-1.410L10 14.170l6.590-6.590L18 9l-8 8z"/></g></svg>
<div class="clines"><div>Datasets</div>
<div>Tuby DS</div>
</div>
<div class="cfoot"><svg style="position:absolute;left:9px;top:5px;overflow:visible" width="21" height="21" viewBox="0 0 21 21" ><g transform="translate(0.400 0.200) scale(0.817 0.817)"><path fill="#2fbe9f" d="M11.99 2C6.470 2 2 6.480 2 12s4.470 10 9.990 10C17.520 22 22 17.520 22 12S17.520 2 11.990 2zm4.240 16L12 15.450 7.770 18l1.120-4.810-3.730-3.230 4.920-.42L12 5l1.920 4.530 4.920.42-3.730 3.230L16.230 18z"/></g></svg>0 Active Users, 0 QY (Last 7 Days)</div>
</div>
<div class="card" style="left:1174px;top:710px">
<div class="ctitle">ACME New Masking Policy</div>
<svg style="position:absolute;left:319px;top:10px;overflow:visible" width="25" height="25" viewBox="0 0 25 25" ><g transform="translate(0.000 0.000) scale(1.000 1.000)"><path fill="#3c3c3c" d="M12 8c1.1 0 2-.9 2-2s-.9-2-2-2-2 .9-2 2 .9 2 2 2zm0 2c-1.1 0-2 .9-2 2s.9 2 2 2 2-.9 2-2-.9-2-2-2zm0 6c-1.1 0-2 .9-2 2s.9 2 2 2 2-.9 2-2-.9-2-2-2z"/></g></svg>
<svg style="position:absolute;left:7px;top:72px;overflow:visible" width="55" height="55" viewBox="0 0 55 55" ><g transform="translate(0.450 0.800) scale(2.200 2.177)"><path fill="#a840c8" d="M12.400 1.050h-.8L3 5v6.500c0 5.300 3.700 10.200 9 11.500 5.300-1.300 9-6.200 9-11.500V5l-8.600-3.950z"/><path fill="#fff" d="M10 17l-4-4 1.410-1.410L10 14.170l6.590-6.590L18 9l-8 8z"/></g></svg>
<div class="clines"><div>Datasets</div>
<div>Tuby DS</div>
<div>Tuby Demo Madness</div>
</div>
<div class="cfoot"><svg style="position:absolute;left:9px;top:5px;overflow:visible" width="21" height="21" viewBox="0 0 21 21" ><g transform="translate(0.400 0.200) scale(0.817 0.817)"><path fill="#2fbe9f" d="M11.99 2C6.470 2 2 6.480 2 12s4.470 10 9.990 10C17.520 22 22 17.520 22 12S17.520 2 11.990 2zm4.240 16L12 15.450 7.770 18l1.120-4.810-3.730-3.230 4.920-.42L12 5l1.920 4.530 4.920.42-3.730 3.230L16.230 18z"/></g></svg>0 Active Users, 0 QY (Last 7 Days)</div>
</div>
<div class="card" style="left:1539px;top:710px">
<div class="ctitle">Ben's Simple Policy</div>
<svg style="position:absolute;left:319px;top:10px;overflow:visible" width="25" height="25" viewBox="0 0 25 25" ><g transform="translate(0.000 0.000) scale(1.000 1.000)"><path fill="#3c3c3c" d="M12 8c1.1 0 2-.9 2-2s-.9-2-2-2-2 .9-2 2 .9 2 2 2zm0 2c-1.1 0-2 .9-2 2s.9 2 2 2 2-.9 2-2-.9-2-2-2zm0 6c-1.1 0-2 .9-2 2s.9 2 2 2 2-.9 2-2-.9-2-2-2z"/></g></svg>
<svg style="position:absolute;left:7px;top:72px;overflow:visible" width="55" height="55" viewBox="0 0 55 55" ><g transform="translate(0.450 0.800) scale(2.200 2.177)"><path fill="#a840c8" d="M12.400 1.050h-.8L3 5v6.500c0 5.300 3.700 10.200 9 11.500 5.300-1.300 9-6.200 9-11.500V5l-8.600-3.950z"/><path fill="#fff" d="M10 17l-4-4 1.410-1.410L10 14.170l6.590-6.590L18 9l-8 8z"/></g></svg>
<div class="clines"><div>Datasets</div>
<div>Dataset for 'acme_admin.monitoring'</div>
<div>ben test ds</div>
</div>
<div class="cfoot"><svg style="position:absolute;left:9px;top:5px;overflow:visible" width="21" height="21" viewBox="0 0 21 21" ><g transform="translate(0.400 0.200) scale(0.817 0.817)"><path fill="#2fbe9f" d="M11.99 2C6.470 2 2 6.480 2 12s4.470 10 9.990 10C17.520 22 22 17.520 22 12S17.520 2 11.990 2zm4.240 16L12 15.450 7.770 18l1.120-4.810-3.730-3.230 4.920-.42L12 5l1.920 4.530 4.920.42-3.730 3.230L16.230 18z"/></g></svg>0 Active Users, 0 QY (Last 7 Days)</div>
</div>
</div></div></body></html>
